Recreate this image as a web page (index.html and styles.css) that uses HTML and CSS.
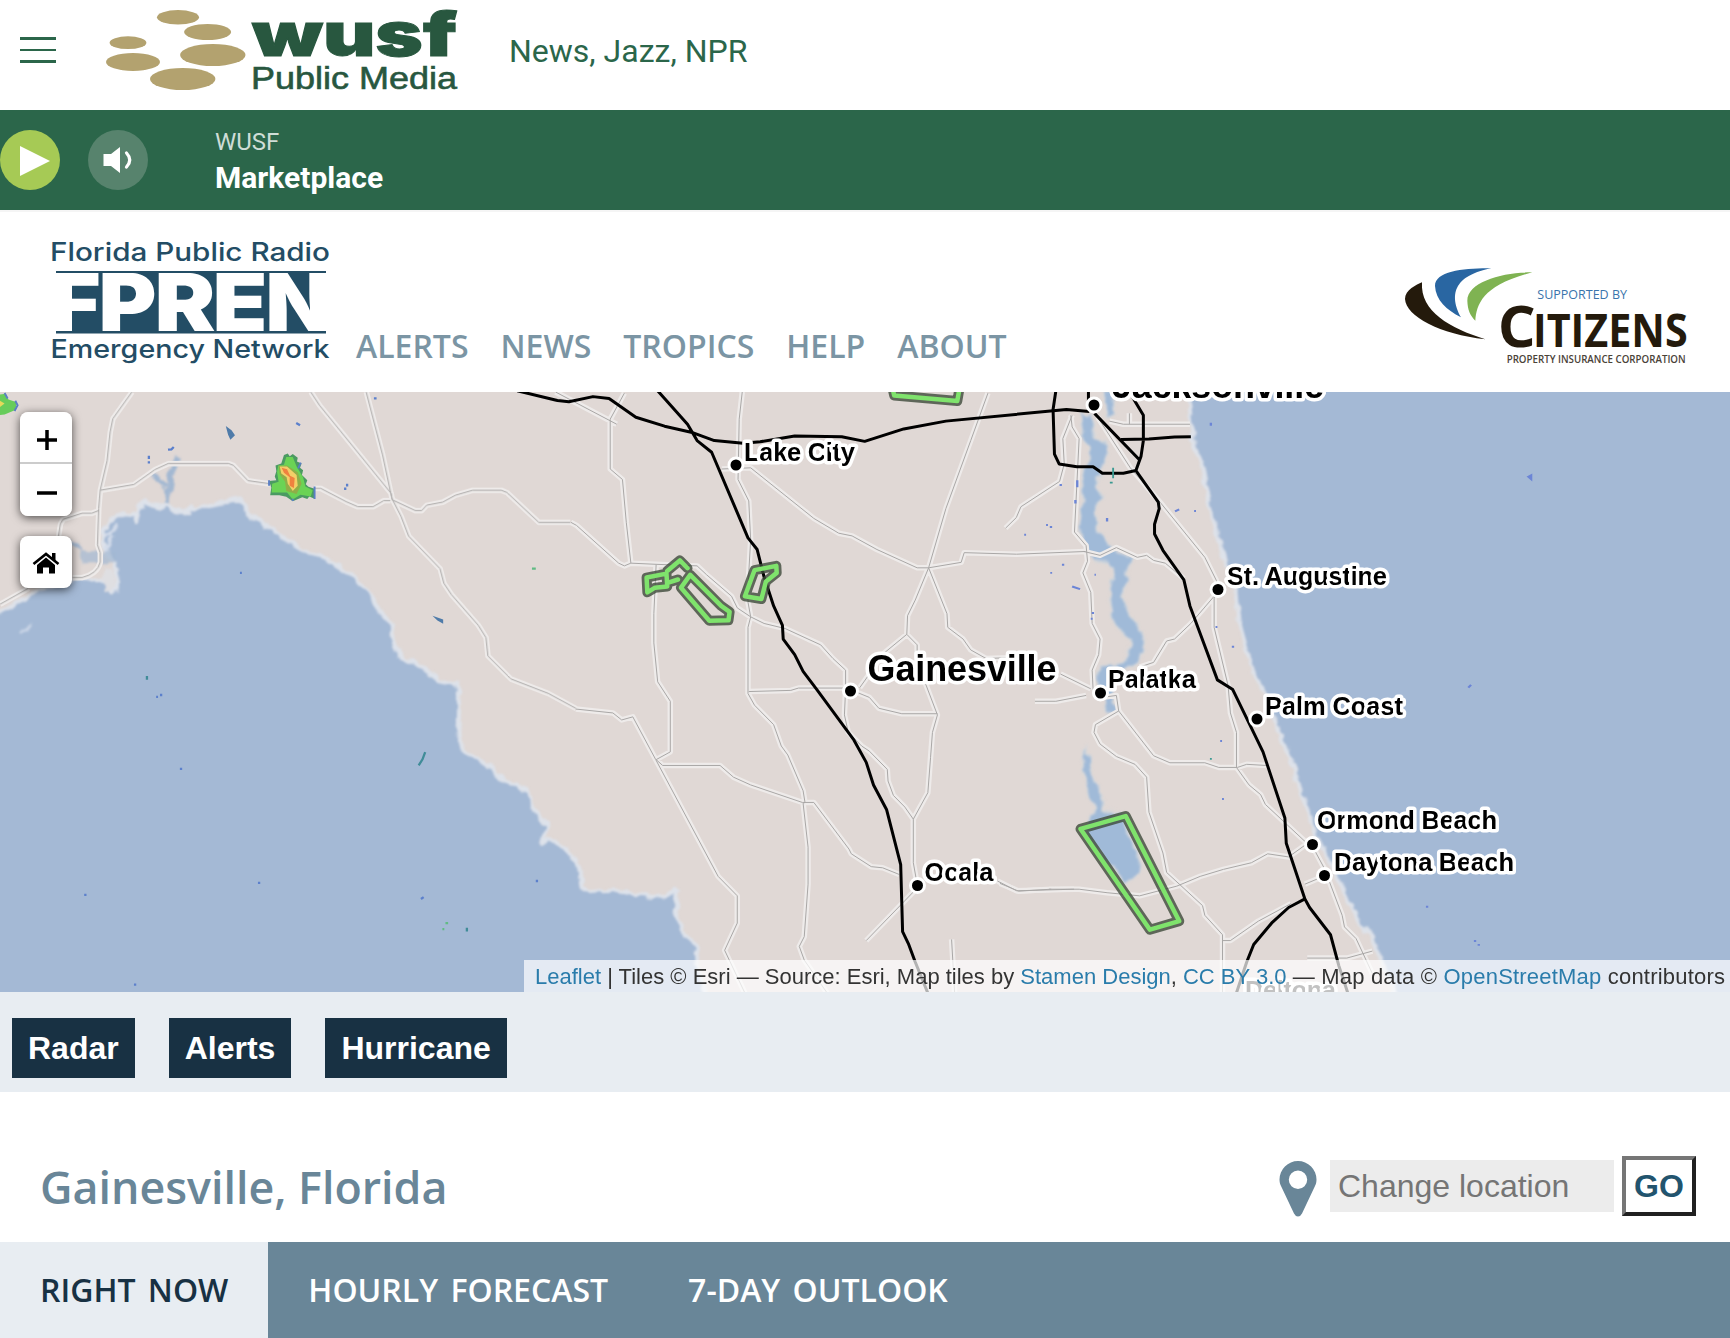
FILE: index.html
```html
<!DOCTYPE html>
<html lang="en">
<head>
<meta charset="utf-8">
<title>WUSF Public Media – Florida Public Radio Emergency Network</title>
<link rel="stylesheet" href="styles.css">
</head>
<body>
<header class="station">
  <button class="menu" aria-label="Menu"><span></span><span></span><span></span></button>
  <svg class="wusf-logo" width="352" height="90" viewBox="105 5 352 90" role="img" aria-label="WUSF Public Media">
    <g fill="#b3a26f">
      <ellipse cx="178" cy="17.3" rx="21" ry="7.3"/><ellipse cx="207.6" cy="32" rx="23.5" ry="8"/>
      <ellipse cx="128" cy="42.7" rx="18.4" ry="6.4"/><ellipse cx="212.8" cy="55" rx="32.7" ry="11"/>
      <ellipse cx="133" cy="62" rx="27" ry="9"/><ellipse cx="182.7" cy="79" rx="32.7" ry="11"/>
    </g>
    <text class="wusf-name" x="252" y="56" textLength="205" lengthAdjust="spacingAndGlyphs">wusf</text>
    <text class="wusf-sub" x="251" y="89" textLength="206" lengthAdjust="spacingAndGlyphs">Public Media</text>
  </svg>
  <p class="tagline">News, Jazz, NPR</p>
</header>

<section class="player">
  <button class="round play" aria-label="Play"><svg width="60" height="60"><path d="M20 16L50 31L20 46Z" fill="#fff"/></svg></button>
  <button class="round volume" aria-label="Volume"><svg width="60" height="60"><path d="M15.500 24H23L32 17V43L23 36H15.500Z" fill="#fff"/><path d="M38.500 23Q45 30 38.500 37" fill="none" stroke="#fff" stroke-width="3.200" stroke-linecap="round"/></svg></button>
  <div class="now">
    <p class="now-station">WUSF</p>
    <p class="now-show">Marketplace</p>
  </div>
</section>

<header class="network">
  <svg class="fpren-logo" width="282" height="130" viewBox="50 236 282 130" role="img" aria-label="Florida Public Radio Emergency Network">
    <g class="fpren-small">
      <text x="50" y="261" textLength="280" lengthAdjust="spacingAndGlyphs">Florida Public Radio</text>
      <text x="50.500" y="358" textLength="279" lengthAdjust="spacingAndGlyphs">Emergency Network</text>
    </g>
    <path d="M56 271H326V273.500H310V331H326V333.500H56V331H72V273.500H56Z" fill="#234d65"/>
    <g class="fpren-big">
      <text x="51.500" y="331" textLength="49" lengthAdjust="spacingAndGlyphs">F</text>
      <text x="98.500" y="331" textLength="58" lengthAdjust="spacingAndGlyphs">P</text>
      <text x="154.500" y="331" textLength="61" lengthAdjust="spacingAndGlyphs">R</text>
      <text x="212.500" y="331" textLength="55" lengthAdjust="spacingAndGlyphs">E</text>
      <text x="265.500" y="331" textLength="65" lengthAdjust="spacingAndGlyphs">N</text>
    </g>
  </svg>
  <nav class="links"><a>ALERTS</a><a>NEWS</a><a>TROPICS</a><a>HELP</a><a>ABOUT</a></nav>
  <svg class="citizens" width="300" height="110" viewBox="60 36 900 330" role="img" aria-label="Supported by Citizens Property Insurance Corporation">
    <path d="M126 97C110 104 75 120 75 147C78 200 180 252 316 268C210 235 120 185 126 97Z" fill="#241a0c"/>
    <path d="M334 55C255 54 165 62 165 108C167 150 200 180 243 202C215 150 205 80 334 55Z" fill="#2966a2"/>
    <path d="M457 67C370 66 262 95 262 152C263 180 270 195 286 212C290 160 310 105 457 67Z" fill="#7fb352"/>
    <text class="cz-by" x="472" y="147" textLength="269" lengthAdjust="spacingAndGlyphs">SUPPORTED BY</text>
    <text class="cz-c" x="353" y="291" textLength="114" lengthAdjust="spacingAndGlyphs">C</text>
    <text class="cz-name" x="459" y="291" textLength="464" lengthAdjust="spacingAndGlyphs">ITIZENS</text>
    <text class="cz-sub" x="380" y="339" textLength="537" lengthAdjust="spacingAndGlyphs">PROPERTY INSURANCE CORPORATION</text>
  </svg>
</header>

<section class="map">
  <svg class="tiles" width="1730" height="600" viewBox="0 392 1730 600">
    <defs>
      <filter id="shore" x="-5%" y="-5%" width="110%" height="110%">
        <feTurbulence type="fractalNoise" baseFrequency=".09" numOctaves="2" seed="4"/>
        <feDisplacementMap in="SourceGraphic" scale="9" xChannelSelector="R" yChannelSelector="G"/>
        <feGaussianBlur stdDeviation=".8"/>
      </filter>
      <g id="roads" fill="none" stroke-linejoin="round">
        <path transform="translate(0 390) scale(.3827)" d="M345 5L295 75L288 110L280 185L262 262L258 310L255 405L262 425V450Q255 480 215 490H190M262 262L350 247L405 208L440 192H597L610 197L648 237L705 245M820 257H838L905 292L935 305H975L1003 289L1020 289M258 315L240 322H215L165 338L158 350L153 382M0 560L75 518M812 5L835 40L1022 270L1025 285L1048 330L1068 382L1150 467L1160 505L1180 535L1250 615L1270 647L1275 695L1335 755L1433 793L1505 832M957 5L1000 170L1025 287L1085 315H1102L1115 301L1157 293L1190 275L1235 262H1310L1325 268L1408 346H1490"/>
        <path transform="translate(500 390) scale(.3827 .3891)" d="M185 340L200 348L310 445L325 452L342 445L408 448L515 452L540 475L605 530L620 560L655 583L690 600L745 613L838 655L870 690L903 720V770L900 835L910 880L945 915L965 928L1012 975L1014 1005L1028 1042L1058 1072L1080 1103L1118 1035L1125 945L1130 880L1143 835L1112 755L1090 700V655L1063 628M1080 1103V1215L1090 1270M145 5L305 88M325 8L288 75V203L320 230L330 340L342 445M633 5L625 75L622 230L650 285L655 385L650 470L648 545L655 583L648 610V780L665 810L715 860L735 915L752 938L792 1030L797 1060L792 1062L805 1175V1270L795 1405L782 1430L795 1465L855 1550M408 448L402 575V650L412 750L445 800V930L408 950M198 820L295 830L318 848L347 840L407 950L570 1250L620 1300V1370L587 1440L640 1550M408 950L425 965H575L610 995L655 1015L790 1060H820L912 1180L918 1192L970 1225L1000 1228L1043 1245M580 203L655 200L820 330L885 368L920 375L985 410L1090 457H1120L1205 443L1213 418L1350 422L1530 415M1275 8L1230 130L1165 305L1120 457L1085 540L1065 580L1063 628L1005 675L940 765M1120 457L1168 575L1170 610L1210 640L1230 668L1270 690L1330 688M650 775L760 772L780 766H905L965 790L990 818L1050 832H1143M1085 1285L957 1415M1180 1412L1188 1550M1300 1262L1350 1287L1500 1283"/>
        <path transform="translate(1000 390) scale(.4655 .3891)" d="M105 1283L170 1283L230 1292L300 1300L380 1275L430 1250L480 1232L540 1215L575 1192L620 1200L655 1170M180 415L215 425L250 405L295 430L315 425L330 438L355 445L395 485M155 65L135 125L138 190L128 235L45 300L35 328L12 355M152 65L155 95L170 125L160 365L185 400L188 440L178 470L195 520L198 600L215 640L212 680L198 720L200 770M130 730L195 768M75 800H120L185 785M220 790L250 785L255 825L205 860L202 880L215 910L250 942L290 962L315 995L320 1085L350 1190L358 1240L435 1325L440 1350L478 1400V1568M478 1415H495L555 1365L625 1320M255 825L330 940L365 958H440L470 970H510L530 962L572 965M210 70L280 200L345 290L440 430L465 490L468 515L460 535V610L490 760L495 830L508 880V970L535 1015L560 1040L570 1065L655 1160L670 1170L697 1230L735 1350L740 1380L765 1410L800 1500M460 530L410 600L375 640L358 645L330 700L300 712M235 80L265 88H408M278 60V88M660 1460H745L800 1442M655 1270L695 1250M0 1268L40 1288L110 1283"/>
      </g>
      <g id="warnings" fill="none" stroke-linejoin="round" stroke-linecap="round">
        <path transform="translate(500 390) scale(.3827 .3891)" d="M1024 -12L1030 14L1195 28L1202 -12M383 482L435 472L437 505L405 508L385 520ZM437 465L470 438L490 458M440 495L465 487M497 475L578 555L600 570L597 592L547 593L473 508ZM665 463L722 452L723 470L695 492L683 537L640 530Z"/>
        <path transform="translate(1000 390) scale(.4655 .3891)" d="M173 1128L270 1095L385 1365L322 1387Z"/>
      </g>
    </defs>
    <rect y="392" width="1730" height="600" fill="#e0d8d5"/>
    <g filter="url(#shore)">
      <g class="water">
        <path transform="translate(0 390) scale(.3827)" d="M-40 600L0 578L40 560L85 530L130 510L200 495H250L275 505L290 525L305 520L308 470L290 440L282 425L268 400V370L290 340L320 322L350 325L358 342L375 290L400 298L420 310L440 300L455 310L470 322L520 305L560 295L605 288L628 282L645 318L690 350L740 385L790 420L840 432L890 465L935 492L970 535L990 575L1022 610L1030 660L1050 700L1100 722L1150 762L1195 770L1200 830L1198 900L1215 945L1260 970L1290 992L1310 1022L1350 1030L1380 1055L1400 1110L1430 1138L1420 1185L1440 1172L1470 1195L1500 1215L1515 1260L1520 1300L1534 1312L1606 1308L1676 1320L1736 1324L1768 1308L1766 1362L1781 1403L1786 1423L1816 1444L1821 1505L1831 1525L1850 1650H-40Z"/>
        <path transform="translate(1000 390) scale(.4655 .3891)" d="M400 -40L415 130L435 200L450 300L468 370L480 430L505 510L512 590L535 690L550 740L575 800L600 880L630 970L655 1060L680 1150L710 1210L740 1290L770 1360L800 1410L830 1500L865 1610H1620V-40Z"/>
      </g>
      <g fill="#a0bad8" stroke="#d6dade" stroke-width="2" stroke-opacity=".6">
        <path transform="translate(1000 390) scale(.4655 .3891)" d="M222 0H240L244 60L232 70ZM170 60H198L205 120L230 140L232 165L222 192L205 250L222 275L205 300L210 360L235 400L260 420L290 430L275 460L262 530L275 570L305 620L310 650L300 700L240 735V785L248 830H230L225 790L205 750L215 710L265 700L285 650L245 600L235 520L245 460L195 425L168 370L178 290L172 230L195 160L175 110ZM185 910L198 980L215 1030L220 1080L265 1090L306 1240L270 1270L180 1130L205 1080L190 1040L178 970Z"/>
      </g>
      <g class="scaled" transform="translate(0 390) scale(.3827)" fill="none" stroke="#a3b8d2" stroke-linejoin="round">
        <path d="M465 175L445 225L438 300" stroke-width="15"/><path d="M395 217L436 252M188 392L215 420" stroke-width="9"/>
        <path d="M210 437H300" stroke-width="26" stroke-opacity=".7"/>
        <path d="M272 390L308 355M278 425L295 380" stroke="#d3dcea" stroke-width="9"/>
        <path d="M50 635L85 610" stroke="#c8d4e6" stroke-width="9"/><path d="M285 465V520" stroke="#dfdfe2" stroke-width="28"/>
      </g>
    </g>
    <use href="#roads" class="road-case"/>
    <use href="#roads" class="road-line"/>
    <g class="interstate">
      <path transform="translate(500 390) scale(.3827 .3891)" d="M45 2L150 27L180 30L243 17L285 22L355 70L430 93L505 110L560 130L635 137L680 133L770 118L893 120L953 132L1055 100L1165 80L1480 50L1540 55M412 2L490 88L515 130L553 160L648 380L672 410L690 480L715 555L738 605L740 640L770 680L792 723L828 770L925 900L957 957L976 1015L1010 1078L1047 1220L1052 1392L1068 1425L1085 1470L1118 1550"/>
      <path transform="translate(1000 390) scale(.4655 .3891)" d="M120 2L114 50L117 165L127 190L165 197H200L220 214H265L292 207L303 170L308 130V65L278 5M203 60L300 180L292 207L340 288L342 305L332 345V370L350 412L395 488L408 555L467 745L500 770L565 930L612 1100L615 1165L655 1308L665 1330L710 1400L728 1480L750 1560M260 127L320 126L375 121L410 120M655 1308L620 1330L585 1368L545 1425L530 1470L505 1560M190 2V30"/>
    </g>
    <g class="scaled" transform="translate(0 390) scale(.3827)">
      <path d="M742 170L752 166L757 173L765 167L778 177L776 187L788 192L784 203L792 210L789 222L803 236L799 246L806 253L822 258V284L808 278L803 285L790 280L765 291L748 279L730 275H706L709 255L703 238L722 236L718 226L722 212L720 197L735 192Z" fill="#4b9a62"/>
      <path d="M748 175H765L775 200L792 228L798 252L817 262L812 278L785 274L765 286L750 268H710L711 245L728 240L724 215L727 197L742 195Z" fill="#6bd355"/>
      <path d="M728 198L750 197L778 215L788 245L775 272L748 264L745 240L731 220Z" fill="#8fae48"/>
      <path d="M731 200L750 200L775 222L778 250L765 264L752 245L749 228L735 218Z" fill="#f3cf68"/>
      <path d="M736 203L750 207L758 224L770 230L768 256L757 250L757 228L742 216Z" fill="#f0813f"/>
      <path d="M-5 12L15 10L22 25L44 32L40 52L12 64L-5 66Z" fill="#67cc5b"/><path d="M-5 25L12 35L-5 48Z" fill="#e4d95b"/>
      <path d="M40 28L46 40L38 55M12 8L20 22M786 190L779 205M822 252V285M703 236V250M765 290V284" fill="none" stroke="#5b7fc4" stroke-width="5"/>
      <path d="M590 94L605 105L614 118L602 130L596 117ZM1130 590L1158 600V611L1143 602Z" fill="#4f7ba9"/>
      <path d="M1111 946L1104 965L1094 981" fill="none" stroke="#408c98" stroke-width="6"/>
      <path d="M439 156L448 155L454 149M774 86L784 92M389 172V180M389 186V192M907 245V252M902 255V261M977 22H984M408 802H413M418 797H424M470 990H476M674 1288H680M220 1319H226M350 1554H356M1100 1330L1107 1325M1400 1283H1406M627 478H632" fill="none" stroke="#5c80cc" stroke-width="6"/>
      <path d="M384 747V757M1220 1405V1415" stroke="#408c98" stroke-width="6"/>
      <path d="M1390 467H1400M1156 1409H1161M1164 1393H1171" stroke="#61bb84" stroke-width="6"/>
    </g>
    <g class="scaled" transform="translate(1000 390) scale(.4655 .3891)" fill="none" stroke="#6c85d6" stroke-width="5">
      <path d="M453 84V92M1135 223L1141 219V229ZM1006 765L1012 758M915 1328H920M1018 1416H1023M1026 1426H1031M166 232V250M162 283V292M230 329V338M99 347H103M107 352H112M52 372H56M108 470H112M133 449H138M203 475H206M155 505L172 512M197 573H202M195 588H199M417 311H421M498 660H503M463 609H467M473 902H477M477 1051H481M128 244H133M376 312L385 307"/>
      <path d="M243 200V227M236 238H242M451 948H455" stroke="#3b9a92" stroke-width="4"/>
    </g>
    <use href="#warnings" class="warn-edge"/>
    <use href="#warnings" class="warn-line"/>
    <g class="dots">
      <circle cx="736" cy="465" r="5.500"/><circle cx="850.500" cy="691" r="5.500"/><circle cx="917.500" cy="885.500" r="5.500"/>
      <circle cx="1094" cy="405" r="5.500"/><circle cx="1218" cy="589.500" r="5.500"/><circle cx="1100.500" cy="693" r="5.500"/>
      <circle cx="1257" cy="719" r="5.500"/><circle cx="1312.500" cy="844.500" r="5.500"/><circle cx="1324.500" cy="875.500" r="5.500"/>
    </g>
    <g class="cities">
      <text class="major" x="1112" y="398" textLength="212">Jacksonville</text>
      <text class="major" x="867.500" y="681" textLength="189">Gainesville</text>
      <text x="744" y="460.500" textLength="111">Lake City</text>
      <text x="924.500" y="880.500" textLength="69">Ocala</text>
      <text x="1227" y="584.500" textLength="160">St. Augustine</text>
      <text x="1108" y="687.500" textLength="88">Palatka</text>
      <text x="1265" y="714.500" textLength="138">Palm Coast</text>
      <text x="1317" y="828.500" textLength="180">Ormond Beach</text>
      <text x="1334" y="871" textLength="180">Daytona Beach</text>
      <text x="1245" y="999" textLength="91" fill="#333">Deltona</text>
    </g>
  </svg>
  <div class="controls">
    <div class="zoom"><button aria-label="Zoom in"><svg width="22" height="22"><path d="M1 11H21M11 1V21" stroke="#000" stroke-width="3.500"/></svg></button><button aria-label="Zoom out"><svg width="22" height="22"><path d="M1 11H21" stroke="#000" stroke-width="3.500"/></svg></button></div>
    <button class="home" aria-label="Home"><svg width="28" height="24" viewBox="0 0 28 24"><path d="M1.500 13L14 3L26.500 13" fill="none" stroke="#000" stroke-width="2.700"/><path d="M20 2H23.500V10L20 7ZM14 6.500L23 14V22.500H17V16.500H11V22.500H5V14Z"/></svg></button>
  </div>
  <p class="credit"><a>Leaflet</a> | Tiles © Esri — Source: Esri, Map tiles by <a>Stamen Design</a>, <a>CC BY 3.0</a> <span class="credit-data">— Map data © <a>OpenStreetMap</a> contributors</span></p>
</section>

<div class="layers"><button>Radar</button><button>Alerts</button><button>Hurricane</button></div>

<section class="place">
  <h1>Gainesville, Florida</h1>
  <form class="search">
    <svg width="38" height="56" viewBox="0 0 38 56"><path fill="#698698" fill-rule="evenodd" d="M19 0A18.500 18.500 0 0 1 37.500 18.500C37.500 21 37 23 36 25L23 52.500Q21.500 55.500 19 55.500T15 52.500L2 25C1 23 .5 21 .5 18.500A18.500 18.500 0 0 1 19 0ZM19 9.500A9.200 9.200 0 1 0 19 27.900A9.200 9.200 0 1 0 19 9.500Z"/></svg>
    <input type="text" placeholder="Change location">
    <button type="button">GO</button>
  </form>
</section>

<nav class="tabs"><a class="active">RIGHT NOW</a><a>HOURLY FORECAST</a><a>7-DAY OUTLOOK</a></nav>
</body>
</html>
```
FILE: styles.css
```css
* { box-sizing: border-box; }
body { margin: 0; background: #fff; font-family: "Open Sans", sans-serif; overflow: hidden; }
p, h1 { margin: 0; }
button { padding: 0; border: 0; }
svg { display: block; flex: none; }

.station { display: flex; align-items: center; height: 110px; padding: 0 0 10px 20px; }
.menu { display: flex; flex-direction: column; gap: 9px; width: 36px; margin-right: 49px; background: none; }
.menu span { height: 2.5px; background: #2b664a; }
.wusf-logo { overflow: visible; }
.wusf-name { font: 900 61px Inter, sans-serif; fill: #28573f; stroke: #28573f; stroke-width: 1; }
.wusf-sub { font: 31px "Liberation Sans", Arial, sans-serif; fill: #28573f; stroke: #28573f; stroke-width: .6; }
.tagline { margin: 2px 0 0 52px; font: 32px Roboto, sans-serif; color: #2b664a; }

.player { display: flex; align-items: center; height: 100px; background: #2b664a; color: #fff; font-family: Roboto, sans-serif; }
.round { width: 60px; height: 60px; border-radius: 50%; }
.play { background: #a6ca55; }
.volume { margin-left: 28px; background: #57836d; }
.now { margin-left: 67px; }
.now-station { font-size: 24px; line-height: 36px; color: #cfddd6; }
.now-show { font-size: 30px; line-height: 36px; font-weight: 700; }

.network { display: flex; height: 182px; padding: 24px 30px 0 50px; border-top: 2px solid #f5f5f5; }
.fpren-small { font: 500 25.5px Inter, sans-serif; fill: #234d65; }
.fpren-big { font: 900 79.5px Inter, sans-serif; fill: #fff; }
.links { display: flex; gap: 32px; margin: 88px 0 0 24px; font-weight: 600; font-size: 32px; line-height: 44px; color: #7b95a4; }
.citizens { margin: 26px 0 0 auto; overflow: visible; }
.cz-by { font: 38px "Open Sans", sans-serif; fill: #3a74ac; }
.cz-c { font: 700 174px "Open Sans", sans-serif; fill: #241a0c; }
.cz-name { font: 700 137px "Open Sans", sans-serif; fill: #241a0c; }
.cz-sub { font: 600 33px "Open Sans", sans-serif; fill: #4a4238; }

.map { position: relative; height: 600px; overflow: hidden; }
.tiles path { vector-effect: non-scaling-stroke; }
.tiles .scaled path { vector-effect: none; }
.water { fill: #a4b9d5; stroke: #dde2ea; stroke-width: 4; stroke-linejoin: round; }
.road-case { stroke: #eeebea; stroke-width: 5.5; }
.road-line { stroke: #a9a7a6; stroke-width: 1; }
.interstate { fill: none; stroke: #000; stroke-width: 3; stroke-linejoin: round; }
.warn-edge { stroke: #3d4a39; stroke-width: 10; stroke-opacity: .8; }
.warn-line { stroke: #7fe36c; stroke-width: 4.5; }
.dots circle { fill: #000; stroke: #fff; stroke-width: 6; paint-order: stroke; }
.cities { font: 700 25.5px "Liberation Sans", Arial, sans-serif; stroke: #fff; stroke-width: 7; stroke-linejoin: round; paint-order: stroke; }
.major { font-size: 36px; }
.controls { position: absolute; left: 20px; top: 20px; display: flex; flex-direction: column; gap: 20px; }
.controls button { display: grid; place-items: center; width: 52px; height: 52px; background: #fff; }
.zoom, .controls .home { border-radius: 8px; overflow: hidden; box-shadow: 0 2px 10px rgba(0, 0, 0, .65); }
.zoom button:first-child { border-bottom: 2px solid #ccc; }
.zoom button { padding-left: 2px; padding-top: 5px; }
.controls .home { padding-top: 2px; }
.credit { position: absolute; right: 0; bottom: 0; width: 1206px; height: 32px; padding-left: 11px; background: rgba(255, 255, 255, .7); font: 22px/34px "Liberation Sans", Arial, sans-serif; color: #333; white-space: nowrap; }
.credit a { color: #2a7cab; }
.credit-data { letter-spacing: .2px; }

.layers { display: flex; gap: 34px; height: 100px; padding: 26px 12px 0; background: #e8edf2; }
.layers button { height: 60px; padding: 0 16px; background: #183143; color: #fff; font: 700 32px "Liberation Sans", Arial, sans-serif; }

.place { display: flex; align-items: center; justify-content: space-between; height: 150px; padding: 38px 34px 0 40px; }
.place h1 { margin-top: 2px; font-weight: 600; font-size: 44.8px; line-height: 60px; color: #698698; }
.search { display: flex; align-items: center; }
.search svg { margin-top: 5px; }
.search input { width: 284px; height: 52px; margin: 0 8px 0 13px; padding: 0 8px; border: 0; background: #ececec; font: 32px "Liberation Sans", Arial, sans-serif; }
.search input::placeholder { color: #757575; }
.search button { width: 74px; height: 60px; border: 4px solid; border-color: #767676 #212121 #212121 #767676; background: #fff; color: #22546e; font: 700 32px "Liberation Sans", Arial, sans-serif; }

.tabs { display: flex; height: 96px; background: #698698; color: #fff; font-weight: 600; font-size: 32px; line-height: 96px; word-spacing: 4px; }
.tabs a { padding: 0 40px; }
.tabs .active { background: #e8edf2; color: #183143; }
```
